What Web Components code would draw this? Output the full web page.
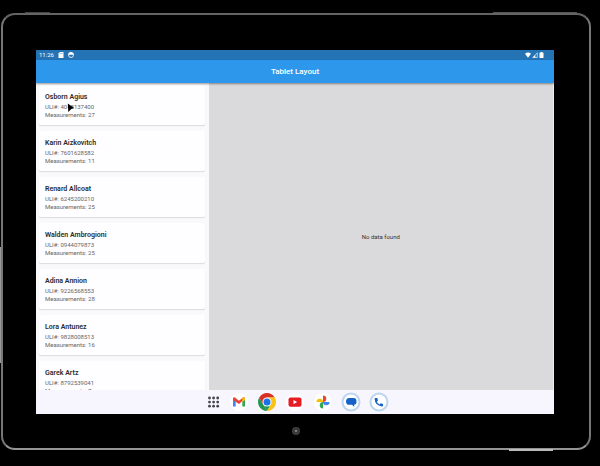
<!DOCTYPE html>
<html lang="en">
<head>
<meta charset="utf-8">
<title>Tablet Layout</title>
<style>
html,body{height:100%;margin:0;background:#000}
body{font-family:Roboto,"Liberation Sans",sans-serif;color:#222}
</style>
</head>
<body>
<tablet-frame>
  <status-bar></status-bar>
  <app-bar>Tablet Layout</app-bar>
  <split-view>
    <patient-list slot="list">
      <patient-card name="Osborn Agius" uli="4048137400" count="27"></patient-card>
      <patient-card name="Karin Aizkovitch" uli="7601628582" count="11"></patient-card>
      <patient-card name="Renard Allcoat" uli="6245200210" count="25"></patient-card>
      <patient-card name="Walden Ambrogioni" uli="0944079873" count="25"></patient-card>
      <patient-card name="Adina Annion" uli="9226568553" count="28"></patient-card>
      <patient-card name="Lora Antunez" uli="9828008513" count="16"></patient-card>
      <patient-card name="Garek Artz" uli="8792539041" count="7"></patient-card>
    </patient-list>
    <p slot="detail">No data found</p>
  </split-view>
  <task-bar></task-bar>
</tablet-frame>
<mouse-pointer></mouse-pointer>
<script>
function define(name, html) {
  customElements.define(name, class extends HTMLElement {
    constructor() {
      super();
      this.attachShadow({mode: 'open'}).innerHTML = html;
    }
  });
}

define('tablet-frame', `
<style>
:host{display:block;box-sizing:border-box;height:100vh;padding:13px 9px 16px 1px}
.body{position:relative;box-sizing:border-box;height:100%;border:2px solid #777;border-top-color:#646464;border-bottom-color:#969396;border-radius:14px;padding:35px 35px 34px 33px}
.screen{height:100%;display:flex;flex-direction:column;overflow:hidden;background:#fafafa}
.camera{position:absolute;left:50%;bottom:13px;width:8px;height:8px;margin-left:-4px;border-radius:50%;background:radial-gradient(#777 0 1px,#222 2px,#444 3px,#3b3b3b 4px)}
.key{position:absolute;background:#999}
.power{right:36px;bottom:-3px;width:44px;height:2px;background:#bbb}
.top-a{left:22px;top:-3px;width:25px;height:1px;background:#444}
.top-b{right:12px;top:-3px;width:84px;height:1px;background:#555}
.side{left:-3px;top:232px;width:1px;height:116px}
</style>
<div class="body">
  <main class="screen"><slot></slot></main>
  <span class="camera"></span><span class="key power"></span><span class="key top-a"></span><span class="key top-b"></span><span class="key side"></span>
</div>`);

define('status-bar', `
<style>
:host{display:flex;flex:none;align-items:center;justify-content:space-between;height:10px;padding:0 10px 0 3px;background:#2473b4;color:#fff;font-size:6px;line-height:10px}
div{display:flex;align-items:center;gap:4px}
.right{gap:1px}
svg{display:block;fill:#fff}
</style>
<div><time>11:26</time>
<svg width="6" height="6" viewBox="0 0 6 6"><path d="M2 0h3q.5 0 .5.5v5q0 .5-.5.5H1Q.5 6 .5 5.500V1.500z"/><path d="M2.300 1v1M3.300 1v1M4.300 1v1" stroke="#2473b4" stroke-width=".4"/></svg>
<svg width="6" height="6" viewBox="0 0 6 6"><circle cx="3" cy="3" r="2.500" fill="none" stroke="#fff" stroke-width=".8"/><path d="M.3 1.800Q3-1.800 5.700 1.800v1H.3z"/></svg></div>
<div class="right">
<svg width="6" height="6" viewBox="0 0 6 6"><path d="M0 1.700Q3-.8 6 1.700L3 5.700z"/></svg>
<svg width="6" height="6" viewBox="0 0 6 6"><path d="M.7 5.500L5.300.8v4.700z" fill="none" stroke="#fff" stroke-width=".6"/><path d="M3.300 3v2.500H1z"/></svg>
<svg width="5" height="6" viewBox="0 0 5 6"><path d="M1.800 0h1.400v.6H4q.5 0 .5.500v4.400q0 .5-.5.500H1q-.5 0-.5-.5V1.100Q.5.600 1 .600h.8z"/></svg></div>`);

define('app-bar', `
<style>
:host{display:grid;place-items:center;flex:none;height:23px;background:#2d98eb;color:#fff;box-shadow:0 1px 2px #0006;position:relative;z-index:1}
h1{margin:0;font-size:8px;line-height:12px;font-weight:500}
</style>
<h1><slot></slot></h1>`);

define('split-view', `
<style>
:host{display:grid;grid-template-columns:1fr 2fr;flex:1;min-height:0}
.list{overflow:hidden;min-height:0;background:#f9f8fa}
.detail{display:grid;place-items:center;background:#dad9db;border-right:1px solid #eee}
::slotted(p){margin:0;font-size:6px;line-height:8px;color:#333}
</style>
<section class="list"><slot name="list"></slot></section>
<section class="detail"><slot name="detail"></slot></section>`);

define('patient-list', `
<style>
:host{display:flex;flex-direction:column;gap:6px;padding:2px 4px 2px 3px}
</style>
<slot></slot>`);

customElements.define('patient-card', class extends HTMLElement {
  connectedCallback() {
    const root = this.attachShadow({mode: 'open'});
    root.innerHTML = `
<style>
:host{display:block;flex:none;box-sizing:border-box;height:40px;padding:7px 6px 6px;background:#fefdff;border-radius:2px;box-shadow:0 1px 1px #0000001f}
h2{margin:0 0 1px;font-size:7px;line-height:10px;font-weight:600;color:#2c2c2c}
p{margin:0;font-size:6px;line-height:8px;color:#666}
</style>
<h2></h2><p class="uli"></p><p class="count"></p>`;
    root.querySelector('h2').textContent = this.getAttribute('name');
    root.querySelector('.uli').textContent = 'ULI#: ' + this.getAttribute('uli');
    root.querySelector('.count').textContent = 'Measurements: ' + this.getAttribute('count');
  }
});

define('task-bar', `
<style>
:host{display:flex;flex:none;align-items:center;justify-content:center;gap:8px;height:24px;background:#f7f5fe}
button{border:0;margin:0;padding:0;background:none;display:block;width:20px;height:20px}
svg{display:block;width:20px;height:20px}
</style>
<button aria-label="All apps"><svg viewBox="0 0 20 20"><g fill="#44444b"><circle cx="8.500" cy="6" r="1.400"/><circle cx="12.600" cy="6" r="1.400"/><circle cx="16.700" cy="6" r="1.400"/><circle cx="8.500" cy="10.100" r="1.400"/><circle cx="12.600" cy="10.100" r="1.400"/><circle cx="16.700" cy="10.100" r="1.400"/><circle cx="8.500" cy="14.200" r="1.400"/><circle cx="12.600" cy="14.200" r="1.400"/><circle cx="16.700" cy="14.200" r="1.400"/></g></svg></button>
<button aria-label="Gmail"><svg viewBox="0 0 20 20"><circle cx="10" cy="10" r="9" fill="#fff"/><path d="M4 7v7.500h2.700V9.500L4 7z" fill="#4285f4"/><path d="M16 7v7.500h-2.700V9.500L16 7z" fill="#34a853"/><path d="M4 8V6.500Q4.300 4.800 6 5.600l4 3.200 4-3.200q1.700-.8 2 .9L10 12z" fill="#ea4335"/><path d="M14 5.600q1.700-.8 2 .9V8l-2.700 2V6.100z" fill="#fbbc04"/></svg></button>
<button aria-label="Chrome"><svg viewBox="0 0 20 20"><path d="M2.210 5.500L6.100 12.250 10 19A9 9 0 0 1 2.210 5.500z" fill="#219653"/><path d="M2.210 5.500A9 9 0 0 1 17.790 5.500H10L6.100 12.250z" fill="#d93025"/><path d="M13.900 12.250L10 19 6.100 12.250z" fill="#219653"/><path d="M13.900 12.250L10 19A9 9 0 0 0 17.790 5.500H10z" fill="#fbc116"/><circle cx="10" cy="10" r="4.500" fill="#fff"/><circle cx="10" cy="10" r="3.500" fill="#1a73e8"/></svg></button>
<button aria-label="YouTube"><svg viewBox="0 0 20 20"><circle cx="10" cy="10" r="9" fill="#fff"/><rect x="3.500" y="5.500" width="13" height="9.200" rx="2" fill="#e81c23"/><path d="M8.500 8v4.200l3.600-2.100z" fill="#fff"/></svg></button>
<button aria-label="Photos"><svg viewBox="0 0 20 20"><circle cx="10" cy="10" r="9" fill="#fff"/><path d="M10 10V3.500A3.250 3.250 0 0 1 10 10z" fill="#ea4335"/><path d="M10 10h6.500A3.250 3.250 0 0 1 10 10z" fill="#4285f4"/><path d="M10 10v6.500A3.250 3.250 0 0 1 10 10z" fill="#34a853"/><path d="M10 10H3.500A3.250 3.250 0 0 1 10 10z" fill="#fbbc04"/></svg></button>
<button aria-label="Messages"><svg viewBox="0 0 20 20"><circle cx="10" cy="10" r="8.500" fill="#fff" stroke="#bcd6ef" stroke-width="2"/><path d="M7.500 6h5.500q2.500.3 2.500 3.400T13 12.800l.3 2.200-2.300-2.200H7.500Q5 12.500 5 9.500T7.500 6z" fill="#1663c7"/></svg></button>
<button aria-label="Phone"><svg viewBox="0 0 20 20"><circle cx="10" cy="10" r="8.500" fill="#fff" stroke="#bcd6ef" stroke-width="2"/><path d="M6.300 6h2l.7 2.400-1.200 1.300q.9 1.800 2.700 2.700l1.300-1.200 2.300.7v1.900Q14 14.400 13 14.400 6 13.500 5.600 7q0-.8.700-1z" fill="#1663c7"/></svg></button>`);

define('mouse-pointer', `
<style>
:host{position:absolute;left:67px;top:103px;z-index:2;pointer-events:none}
svg{display:block}
</style>
<svg width="8" height="10" viewBox="0 0 8 10"><path d="M.8.500L7 5 4.300 6 1.300 9z" fill="#000"/></svg>`);
</script>
</body>
</html>
